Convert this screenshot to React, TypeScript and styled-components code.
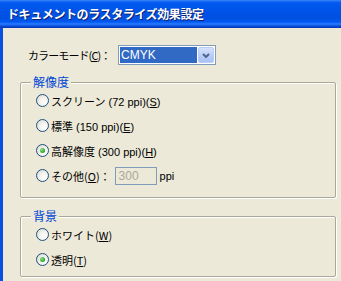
import styled, { createGlobalStyle } from 'styled-components';

const GlobalStyle = createGlobalStyle`
  html, body {
    margin: 0;
    padding: 0;
    background: #ece9d8;
    overflow: hidden;
  }
  body {
    font-family: "Noto Sans CJK JP", "DejaVu Sans", sans-serif;
  }
`;

const Window = styled.div`
  width: 341px;
  height: 281px;
  display: flex;
  flex-direction: column;
  background: #ece9d8;
  overflow: hidden;
`;

const TitleBar = styled.div`
  height: 28px;
  flex: none;
  box-sizing: border-box;
  display: flex;
  align-items: center;
  padding: 0 0 2px 7px;
  background: linear-gradient(
    to bottom,
    #3d8ff7 0px,
    #1f6ff5 1px,
    #0058ee 3px,
    #0054e9 10px,
    #0050e0 18px,
    #0159f2 22px,
    #2a7cff 24px,
    #0a4fd8 26px,
    #0036b5 28px
  );
  color: #fff;
  font-weight: bold;
  font-size: 12px;
  letter-spacing: -0.4px;
  text-shadow: 1px 1px 0 #0f1f6b;
`;

const Body = styled.div`
  flex: 1;
  display: flex;
  flex-direction: column;
  border-left: 3px solid #0750e0;
  padding: 17px 5px 0 17px;
`;

const ColorRow = styled.div`
  display: flex;
  align-items: center;
  height: 20px;
  margin-left: 8px;
  font-size: 11px;
  white-space: nowrap;
`;

const FieldLabel = styled.span`
  width: 90px;
  flex: none;
  letter-spacing: -0.9px;
`;

const Select = styled.div`
  width: 98px;
  height: 20px;
  box-sizing: border-box;
  border: 1px solid #7f9db9;
  background: #fff;
  display: flex;
  align-items: stretch;
  padding: 1px;
  gap: 1px;
`;

const SelectValue = styled.div`
  flex: 1;
  background: #316ac5;
  color: #fff;
  font-family: "Liberation Sans", Arial, sans-serif;
  font-size: 12px;
  display: flex;
  align-items: center;
  padding-left: 1px;
`;

const DropButton = styled.div`
  width: 16px;
  display: flex;
  align-items: center;
  justify-content: center;
  border-radius: 2px;
  background: linear-gradient(to bottom, #d5e2fd, #b7cbf8 60%, #aac2f5);
  border: 1px solid #bacdf5;
  box-sizing: border-box;
`;

const Group = styled.fieldset<{ $gap: number; $bottom: number }>`
  margin: ${(p) => p.$gap}px 0 0 0;
  padding: 0 0 ${(p) => p.$bottom}px 15px;
  border: 1px solid #aca899;
  border-radius: 2px;
  box-shadow: inset 1px 1px 0 #fff, 1px 1px 0 #fff;
  min-width: 0;
`;

const Legend = styled.legend`
  color: #0046d5;
  font-size: 12px;
  line-height: 12px;
  padding: 0 2px;
  margin-left: -5px;
  background: #ece9d8;
`;

const Option = styled.div`
  display: flex;
  align-items: center;
  height: 25px;
  font-size: 11px;
  color: #000;
  white-space: pre;
`;

const Radio = styled.span<{ $checked?: boolean }>`
  width: 13px;
  height: 13px;
  box-sizing: border-box;
  border-radius: 50%;
  border: 1px solid #1c5180;
  background: radial-gradient(circle at 65% 65%, #ffffff 0%, #f4f3ee 40%, #d6d3c8 100%);
  display: flex;
  align-items: center;
  justify-content: center;
  margin-right: 2px;
  flex: none;

  &::after {
    content: '';
    display: ${(p) => (p.$checked ? 'block' : 'none')};
    width: 5px;
    height: 5px;
    border-radius: 50%;
    background: radial-gradient(circle at 35% 35%, #8ee68a, #21a121 70%);
  }
`;

const OptionText = styled.span``;

const Key = styled.span`
  text-decoration: underline;
`;

const Latin = styled.span`
  font-family: "Liberation Sans", Arial, sans-serif;
`;

const TextBox = styled.div`
  width: 42px;
  height: 18px;
  box-sizing: border-box;
  border: 1px solid #7f9db9;
  color: #aca899;
  font-family: "Liberation Sans", Arial, sans-serif;
  font-size: 12px;
  display: flex;
  align-items: center;
  padding-left: 3px;
  margin: 0 3px 0 4px;
`;

const resolutions = [
  { label: 'スクリーン', ppi: ' (72 ppi)', key: 'S', checked: false },
  { label: '標準', ppi: ' (150 ppi)', key: 'E', checked: false },
  { label: '高解像度', ppi: ' (300 ppi)', key: 'H', checked: true },
];

export default function App() {
  return (
    <Window>
      <GlobalStyle />
      <TitleBar>ドキュメントのラスタライズ効果設定</TitleBar>
      <Body>
        <ColorRow>
          <FieldLabel>
            カラーモード(<Key>C</Key>)：
          </FieldLabel>
          <Select>
            <SelectValue>CMYK</SelectValue>
            <DropButton>
              <svg width="8" height="5" viewBox="0 0 8 5">
                <path d="M1 1 L4 4 L7 1" fill="none" stroke="#4d6185" strokeWidth="1.8" />
              </svg>
            </DropButton>
          </Select>
        </ColorRow>

        <Group $gap={11} $bottom={9}>
          <Legend>解像度</Legend>
          {resolutions.map((r) => (
            <Option key={r.key}>
              <Radio $checked={r.checked} />
              <OptionText>
                {r.label}
                <Latin>
                  {r.ppi}(<Key>{r.key}</Key>)
                </Latin>
              </OptionText>
            </Option>
          ))}
          <Option>
            <Radio />
            <OptionText>
              その他(<Key>O</Key>)：
            </OptionText>
            <TextBox>300</TextBox>
            <Latin>ppi</Latin>
          </Option>
        </Group>

        <Group $gap={12} $bottom={4}>
          <Legend>背景</Legend>
          <Option>
            <Radio />
            <OptionText>
              ホワイト(<Key>W</Key>)
            </OptionText>
          </Option>
          <Option>
            <Radio $checked />
            <OptionText>
              透明(<Key>T</Key>)
            </OptionText>
          </Option>
        </Group>
      </Body>
    </Window>
  );
}
